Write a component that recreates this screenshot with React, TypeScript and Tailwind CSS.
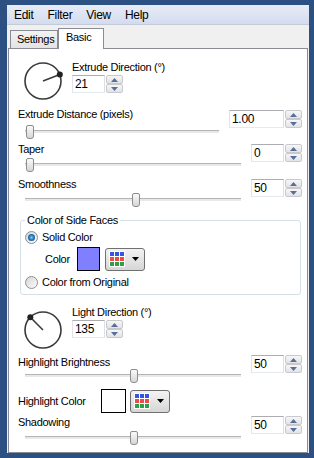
import React from "react";

function SpinBtn({ up }: { up?: boolean }) {
  return (
    <div className="flex h-[9px] items-center justify-center rounded-[2px] border border-[#c7c9cc] bg-linear-to-b from-[#f7f7f7] to-[#e2e3e5]">
      <svg width="7" height="4" viewBox="0 0 7 4">
        <path d={up ? "M0 4 L3.5 0 L7 4Z" : "M0 0 L3.5 4 L7 0Z"} fill="#5a6e99" />
      </svg>
    </div>
  );
}

function NumBox({ value, w }: { value: string; w: string }) {
  return (
    <div className="flex gap-[1px]">
      <div
        className={`h-[18px] ${w} border border-[#abadb3] border-b-[#e3e9ef] border-l-[#e2e3ea] border-r-[#dbdfe6] bg-white pl-[2px] text-[12px] leading-[16px]`}
      >
        {value}
      </div>
      <div className="flex w-[17px] flex-col">
        <SpinBtn up />
        <SpinBtn />
      </div>
    </div>
  );
}

function Track({ thumb, mt }: { thumb: number; mt: string }) {
  return (
    <div className={`relative ml-[16px] mr-[10px] h-[14px] ${mt}`}>
      <div className="absolute left-0 right-0 top-[5px] h-[3px] border-t border-[#b4b4b4] bg-[#e8e8e8]" />
      <div
        className="absolute top-0 h-[14px] w-[8px] rounded-t-[2px] rounded-b-[3px] border border-[#8d8d8d] bg-linear-to-b from-[#fafafa] to-[#d6d6d6]"
        style={{ left: thumb }}
      />
    </div>
  );
}

type RowProps = {
  label: string;
  value: string;
  w: string;
  thumb: number;
  trackMt: string;
  inputMt: string;
  mt: string;
};

function SliderRow({ label, value, w, thumb, trackMt, inputMt, mt }: RowProps) {
  return (
    <div className={`flex items-start ${mt}`}>
      <div className="flex min-w-0 flex-1 flex-col">
        <div className="h-[14px] pl-[9px] leading-[14px]">{label}</div>
        <Track thumb={thumb} mt={trackMt} />
      </div>
      <div className={`mr-[5px] ${inputMt}`}>
        <NumBox value={value} w={w} />
      </div>
    </div>
  );
}

function Dial({ x, y }: { x: number; y: number }) {
  return (
    <svg width="40" height="40" viewBox="0 0 40 40">
      <circle cx="20" cy="20" r="18" fill="none" stroke="#3a3a3a" strokeWidth="1.6" />
      <line x1="20" y1="20" x2={x} y2={y} stroke="#3a3a3a" strokeWidth="1.6" />
      <circle cx={x} cy={y} r="3" fill="#222" />
    </svg>
  );
}

function DialRow({ label, value, x, y, mt, svgMt }: { label: string; value: string; x: number; y: number; mt: string; svgMt: string }) {
  return (
    <div className={`flex items-start pl-[14px] ${mt}`}>
      <div className={svgMt}>
        <Dial x={x} y={y} />
      </div>
      <div className="ml-[9px] flex flex-col">
        <div className="h-[14px] leading-[14px]">{label}</div>
        <div className="mt-[1px]">
          <NumBox value={value} w="w-[33px]" />
        </div>
      </div>
    </div>
  );
}

function ColorButton() {
  const cells = ["#3456e0", "#3456e0", "#3456e0", "#ee4a4a", "#ee4a4a", "#ee4a4a", "#2fa045", "#2fa045", "#2fa045"];
  return (
    <div className="flex h-[23px] w-[40px] items-center rounded-[3px] border border-[#707070] bg-linear-to-b from-[#f3f3f3] to-[#d6d6d6] pl-[3px]">
      <div className="grid grid-cols-3 gap-[1px] bg-white p-[1px]">
        {cells.map((c, i) => (
          <div key={i} className="h-[4px] w-[4px]" style={{ background: c }} />
        ))}
      </div>
      <svg className="ml-[7px]" width="7" height="4" viewBox="0 0 7 4">
        <path d="M0 0 L3.5 4 L7 0Z" fill="#000" />
      </svg>
    </div>
  );
}

function Radio({ checked }: { checked?: boolean }) {
  return (
    <div className="flex h-[13px] w-[13px] items-center justify-center rounded-full border border-[#8e8f8f] bg-linear-to-br from-[#d6d6d6] to-[#fcfcfc]">
      {checked && <div className="h-[7px] w-[7px] rounded-full bg-radial from-[#7fd0f7] via-[#1e74bd] to-[#0b3f78]" />}
    </div>
  );
}

export default function App() {
  return (
    <div className="flex h-[458px] w-[314px] flex-col bg-[#2c5082] pb-[5px] pl-[7px] pr-[5px] pt-[5px] font-['Liberation_Sans',Arial,sans-serif] text-[11px] tracking-[-0.3px] text-black">
      <div className="flex flex-1 flex-col bg-[#f0f0f0]">
        {/* MENU */}
        <div className="flex h-[20px] border-b border-[#c5cbd6] bg-linear-to-b from-[#e7ecf6] to-[#d3dcef] pl-[0px] pt-[1px] text-[12px] leading-[18px]">
          <span className="px-[7px]">Edit</span>
          <span className="px-[7px]">Filter</span>
          <span className="px-[7px]">View</span>
          <span className="px-[7px]">Help</span>
        </div>

        {/* TABS */}
        <div className="relative z-10 -mb-px flex h-[24px] items-end pl-[3px]">
          <div className="mb-[1px] h-[18px] w-[48px] border border-b-0 border-[#898c95] bg-linear-to-b from-[#f3f3f3] to-[#e3e3e3] pl-[6px] pt-[1px] leading-[14px]">
            Settings
          </div>
          <div className="h-[21px] w-[46px] border border-b-0 border-[#898c95] bg-white pl-[7px] pt-[1px] leading-[14px]">
            Basic
          </div>
        </div>

        {/* PANEL */}
        <div className="ml-[1px] mr-[1px] flex flex-1 flex-col border border-[#898c95] bg-white">
          <DialRow label="Extrude Direction (°)" value="21" x={36.8} y={13.5} mt="mt-[11px]" svgMt="mt-[1px]" />

          <SliderRow label="Extrude Distance (pixels)" value="1.00" w="w-[55px]" thumb={1} trackMt="mt-[4px]" inputMt="mt-[3px]" mt="mt-[6px]" />
          <SliderRow label="Taper" value="0" w="w-[33px]" thumb={1} trackMt="mt-[2px]" inputMt="mt-[2px]" mt="mt-[3px]" />
          <SliderRow label="Smoothness" value="50" w="w-[33px]" thumb={107} trackMt="mt-[2px]" inputMt="mt-[2px]" mt="mt-[5px]" />

          {/* COLOR OF SIDE FACES */}
          <fieldset className="ml-[11px] mr-[6px] mt-[6px] rounded-[3px] border border-[#d5dfe5] px-[4px] pb-[5px]">
            <legend className="px-[2px] leading-[14px]">Color of Side Faces</legend>
            <div className="mt-[3px] flex h-[14px] items-center gap-[4px] leading-[14px]">
              <Radio checked />
              <span>Solid Color</span>
            </div>
            <div className="mt-[3px] flex h-[24px] items-center pl-[20px]">
              <span className="w-[32px]">Color</span>
              <div className="h-[24px] w-[23px] border border-black bg-[#8080ff]" />
              <div className="ml-[5px]">
                <ColorButton />
              </div>
            </div>
            <div className="mt-[4px] flex h-[14px] items-center gap-[4px] leading-[14px]">
              <Radio />
              <span>Color from Original</span>
            </div>
          </fieldset>

          <DialRow label="Light Direction (°)" value="135" x={7.3} y={7.3} mt="mt-[10px]" svgMt="mt-[5px]" />

          <SliderRow label="Highlight Brightness" value="50" w="w-[33px]" thumb={105} trackMt="mt-[0px]" inputMt="mt-[0px]" mt="mt-[5px]" />

          <div className="mt-[6px] flex h-[24px] items-center pl-[9px]">
            <span className="w-[83px]">Highlight Color</span>
            <div className="h-[24px] w-[25px] border border-black bg-white" />
            <div className="ml-[4px]">
              <ColorButton />
            </div>
          </div>

          <SliderRow label="Shadowing" value="50" w="w-[33px]" thumb={105} trackMt="mt-[2px]" inputMt="mt-[1px]" mt="mt-[2px]" />
        </div>
      </div>
    </div>
  );
}
